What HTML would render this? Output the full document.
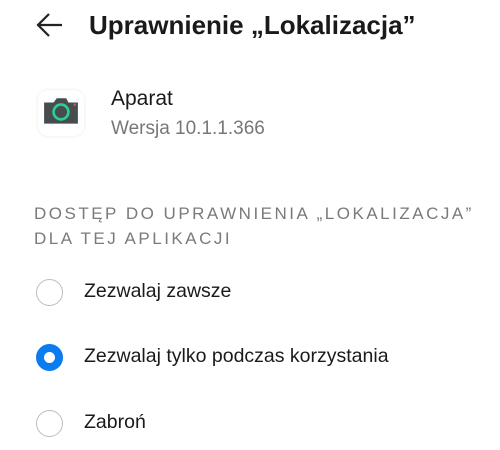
<!DOCTYPE html><html><head><style>
body{margin:0;width:500px;height:450px;background:#fff;font-family:"Liberation Sans",sans-serif;position:relative;overflow:hidden;color:#1a1a1a}
.a{position:absolute;white-space:nowrap}
.r{position:absolute;left:36px;width:27px;height:27px;border:1.5px solid #bdbdbd;border-radius:50%;box-sizing:border-box}
.l{position:absolute;left:84px;font-size:19.5px}
</style></head><body>
<svg class="a" style="left:36px;top:12px" width="28" height="26" viewBox="0 0 28 26"><path d="M26 13H3M13 2L2 13l11 11" fill="none" stroke="#222" stroke-width="2.2"/></svg>
<div class="a" style="left:89px;top:10px;font-size:26px;font-weight:bold;color:#1a1a1a">Uprawnienie „Lokalizacja”</div>
<div class="a" style="left:38px;top:90px;width:46px;height:46px;border-radius:10px;background:#fff;box-shadow:0 0 3px rgba(0,0,0,.1)"></div>
<svg class="a" style="left:42px;top:96px" width="38" height="32" viewBox="0 0 36 30"><path d="M2 6h9l3-4h9l2 4h9v20H2z" fill="#474c50"/><circle cx="18" cy="15" r="7" fill="none" stroke="#2bd08e" stroke-width="2.5"/><circle cx="31" cy="8" r="1.2" fill="#e05050"/></svg>
<div class="a" style="left:111px;top:87px;font-size:21px">Aparat</div>
<div class="a" style="left:111px;top:118px;font-size:19px;color:#777">Wersja 10.1.1.366</div>
<div class="a" style="left:34px;top:201px;font-size:17px;letter-spacing:2.5px;color:#7a7a7a;line-height:25px">DOSTĘP DO UPRAWNIENIA „LOKALIZACJA”<br>DLA TEJ APLIKACJI</div>
<div class="r" style="top:279px"></div><div class="l" style="top:280px">Zezwalaj zawsze</div>
<div class="r" style="top:344px;border:8px solid #0a7cf0"></div><div class="l" style="top:345px">Zezwalaj tylko podczas korzystania</div>
<div class="r" style="top:410px"></div><div class="l" style="top:411px">Zabroń</div>
</body></html>
